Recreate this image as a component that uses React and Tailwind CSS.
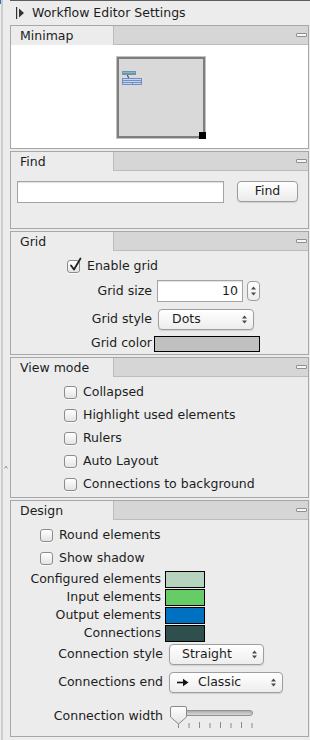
import React from "react";

// Workflow editor settings sidebar: stacked collapsible property sections.

function MinusButton() {
  return <span className="block w-[11px] h-[4px] rounded-[1px] border border-[#8f8f8f] bg-[#f6f6f6]" />;
}

function Section({ title, children }) {
  return (
    <section className="border border-[#a7a7a7] bg-[#ececec]">
      <div className="flex h-[19px]">
        <div className="w-[102px] pl-[9px] leading-[19px]">{title}</div>
        <div className="flex-1 flex items-center justify-end pr-[1px] bg-[#d6d6d6] border-l border-b border-[#bcbcbc]">
          <MinusButton />
        </div>
      </div>
      {children}
    </section>
  );
}

function Checkbox({ checked }) {
  return (
    <span className="relative block w-[13px] h-[13px] shrink-0 rounded-[3px] border border-[#8c8c8c] bg-linear-to-b from-white to-[#e4e4e4] shadow-[0_1px_0_rgba(255,255,255,0.8)]">
      {checked && (
        <svg className="absolute left-[1px] top-[-4px]" width="13" height="15" viewBox="0 0 13 15">
          <path d="M2 8.5 L5 12.5 L11.5 1.5" fill="none" stroke="#222" strokeWidth="1.8" strokeLinecap="round" strokeLinejoin="round" />
        </svg>
      )}
    </span>
  );
}

function UpDown() {
  return (
    <svg width="5" height="9" viewBox="0 0 5 9">
      <path d="M0 3.5 L2.5 0.5 L5 3.5 Z" fill="#4a4a4a" />
      <path d="M0 5.5 L2.5 8.5 L5 5.5 Z" fill="#4a4a4a" />
    </svg>
  );
}

function Select({ className, children }) {
  return (
    <div className={`flex items-center h-[21px] rounded-[4px] border border-[#9e9e9e] bg-linear-to-b from-white to-[#ededed] shadow-[0_1px_1px_rgba(0,0,0,0.12)] ${className}`}>
      <div className="flex-1 flex items-center">{children}</div>
      <div className="pr-[6px] flex items-center">
        <UpDown />
      </div>
    </div>
  );
}

function Swatch({ className }) {
  return <span className={`block border border-black ${className}`} />;
}

function Minimap() {
  return (
    <div className="relative w-[90px] h-[83px] ml-[3px] border border-[#c2c2c2]">
      <div className="w-full h-full border-2 border-[#7e7e7e] bg-[#d9d9d9]">
        <svg width="84" height="77" viewBox="0 0 84 77">
          <rect x="3" y="12" width="14" height="4" fill="#6f8dc6" />
          <line x1="4" y1="13.5" x2="16" y2="13.5" stroke="#86c286" strokeWidth="1" />
          <path d="M8.5 16 L9.5 19" stroke="#333" strokeWidth="1" />
          <rect x="3.5" y="19.5" width="19" height="6" fill="#c9d5ec" stroke="#6f8dc6" />
          <line x1="3.5" y1="21.5" x2="22.5" y2="21.5" stroke="#6f8dc6" />
          <line x1="3.5" y1="23.5" x2="22.5" y2="23.5" stroke="#6f8dc6" />
          <line x1="13.5" y1="23.5" x2="13.5" y2="25.5" stroke="#6f8dc6" />
        </svg>
      </div>
      <span className="absolute right-[-1px] bottom-[-1px] w-[7px] h-[7px] bg-black" />
    </div>
  );
}

function Slider() {
  const ticks = [9.5, 20, 30.5, 41, 51.5, 62, 72.5, 83];
  return (
    <svg width="86" height="26" viewBox="0 0 86 26">
      <defs>
        <linearGradient id="trk" x1="0" y1="0" x2="0" y2="1">
          <stop offset="0" stopColor="#a9a9a9" />
          <stop offset="1" stopColor="#dcdcdc" />
        </linearGradient>
        <linearGradient id="thm" x1="0" y1="0" x2="0" y2="1">
          <stop offset="0" stopColor="#ffffff" />
          <stop offset="1" stopColor="#e2e2e2" />
        </linearGradient>
      </defs>
      <rect x="12.5" y="6.5" width="71" height="5" rx="2.5" fill="url(#trk)" stroke="#929292" />
      {ticks.map((x, i) => (
        <line key={x} x1={x} y1={i % 2 ? 19 : 18} x2={x} y2="24" stroke="#8a8a8a" strokeWidth="1" />
      ))}
      <path d="M1.5 4 Q1.5 2.5 3 2.5 H16 Q17.5 2.5 17.5 4 V13 L9.5 20 L1.5 13 Z" fill="url(#thm)" stroke="#8a8a8a" />
    </svg>
  );
}

function ArrowRight() {
  return (
    <svg width="12" height="9" viewBox="0 0 12 9">
      <line x1="0" y1="4.5" x2="8" y2="4.5" stroke="#111" strokeWidth="1.6" />
      <path d="M6 0.8 L11.5 4.5 L6 8.2 Z" fill="#111" />
    </svg>
  );
}

export default function App() {
  return (
    <div className="w-[310px] h-[740px] flex overflow-hidden bg-[#ececec] text-[12.5px] text-[#1c1c1c] font-['DejaVu_Sans',sans-serif]">
      <div className="relative w-[10px] h-full pl-[1px]">
        <div className="h-full border-l-2 border-[#cdcdcd]" />
        <span className="absolute left-0 top-0 w-[1px] h-[4px] bg-[#3b6fd0]" />
        <svg className="absolute left-[4px] top-[465px]" width="4" height="4" viewBox="0 0 4 4">
          <path d="M0.5 3.5 L2 1 L3.5 3.5" fill="none" stroke="#9a9a9a" strokeWidth="1" />
        </svg>
      </div>

      <div className="w-[300px] flex flex-col border-t border-[#5c5c5c]">
        <div className="h-[24px] flex items-center pl-[6px]">
          <svg width="9" height="12" viewBox="0 0 9 12">
            <rect x="0" y="0" width="1.2" height="12" fill="#333" />
            <path d="M3 1.5 L8 6 L3 10.5 Z" fill="#333" />
          </svg>
          <span className="ml-[7px]">Workflow Editor Settings</span>
        </div>

        <div className="flex flex-col gap-[2px] pr-[1px]">
          <Section title="Minimap">
            <div className="h-[103px] bg-white flex justify-center pt-[11px]">
              <Minimap />
            </div>
          </Section>

          <Section title="Find">
            <div className="h-[57px] flex items-start pt-[10px] pl-[6px]">
              <div className="w-[207px] h-[22px] bg-white border border-[#a4a4a4] shadow-[inset_0_1px_1px_rgba(0,0,0,0.12)]" />
              <div className="ml-[13px] w-[61px] h-[21px] flex items-center justify-center rounded-[4px] border border-[#9c9c9c] bg-linear-to-b from-white to-[#ebebeb] shadow-[0_1px_1px_rgba(0,0,0,0.12)]">
                Find
              </div>
            </div>
          </Section>

          <Section title="Grid">
            <div className="h-[103px] pt-[4px]">
              <div className="h-[22px] flex items-center pl-[56px]">
                <Checkbox checked />
                <span className="ml-[7px]">Enable grid</span>
              </div>
              <div className="h-[28px] flex items-center">
                <span className="w-[141px] text-right">Grid size</span>
                <div className="ml-[5px] w-[86px] h-[22px] flex items-center justify-end pr-[4px] bg-white border border-[#a4a4a4] shadow-[inset_0_1px_1px_rgba(0,0,0,0.12)]">
                  10
                </div>
                <div className="ml-[4px] w-[13px] h-[20px] flex flex-col items-center justify-center gap-[2px] rounded-[4px] border border-[#9e9e9e] bg-linear-to-b from-white to-[#ececec]">
                  <svg width="5" height="4" viewBox="0 0 5 4"><path d="M0 3.5 L2.5 0.5 L5 3.5 Z" fill="#4a4a4a" /></svg>
                  <svg width="5" height="4" viewBox="0 0 5 4"><path d="M0 0.5 L2.5 3.5 L5 0.5 Z" fill="#4a4a4a" /></svg>
                </div>
              </div>
              <div className="h-[29px] flex items-center">
                <span className="w-[141px] text-right">Grid style</span>
                <Select className="ml-[6px] w-[96px]">
                  <span className="pl-[13px]">Dots</span>
                </Select>
              </div>
              <div className="h-[19px] flex items-center">
                <span className="w-[141px] text-right">Grid color</span>
                <Swatch className="ml-[2px] w-[106px] h-[16px] bg-[#c0c0c0]" />
              </div>
            </div>
          </Section>

          <Section title="View mode">
            <div className="h-[120px] pt-[4px] pl-[53px]">
              {["Collapsed", "Highlight used elements", "Rulers", "Auto Layout", "Connections to background"].map((label) => (
                <div key={label} className="h-[23px] flex items-center">
                  <Checkbox />
                  <span className="ml-[6px]">{label}</span>
                </div>
              ))}
            </div>
          </Section>

          <Section title="Design">
            <div className="h-[216px] pt-[4px]">
              {["Round elements", "Show shadow"].map((label) => (
                <div key={label} className="h-[23px] flex items-center pl-[29px]">
                  <Checkbox />
                  <span className="ml-[6px]">{label}</span>
                </div>
              ))}
              <div className="h-[18px] flex items-center">
                <span className="w-[150px] text-right">Configured elements</span>
                <Swatch className="ml-[4px] w-[40px] h-[17px] bg-[#b6d4bd]" />
              </div>
              <div className="h-[18px] flex items-center">
                <span className="w-[150px] text-right">Input elements</span>
                <Swatch className="ml-[4px] w-[40px] h-[17px] bg-[#66cc66]" />
              </div>
              <div className="h-[18px] flex items-center">
                <span className="w-[150px] text-right">Output elements</span>
                <Swatch className="ml-[4px] w-[40px] h-[17px] bg-[#0070c0]" />
              </div>
              <div className="h-[18px] flex items-center">
                <span className="w-[150px] text-right">Connections</span>
                <Swatch className="ml-[4px] w-[40px] h-[17px] bg-[#2f4f4c]" />
              </div>
              <div className="h-[25px] flex items-center">
                <span className="w-[152px] text-right">Connection style</span>
                <Select className="ml-[6px] w-[95px]">
                  <span className="pl-[12px]">Straight</span>
                </Select>
              </div>
              <div className="h-[31px] flex items-center">
                <span className="w-[152px] text-right">Connections end</span>
                <Select className="ml-[6px] w-[114px]">
                  <span className="pl-[7px] flex items-center"><ArrowRight /></span>
                  <span className="ml-[9px]">Classic</span>
                </Select>
              </div>
              <div className="h-[37px] flex items-center">
                <span className="w-[152px] text-right">Connection width</span>
                <span className="ml-[6px] block">
                  <Slider />
                </span>
              </div>
            </div>
          </Section>
        </div>
      </div>
    </div>
  );
}
